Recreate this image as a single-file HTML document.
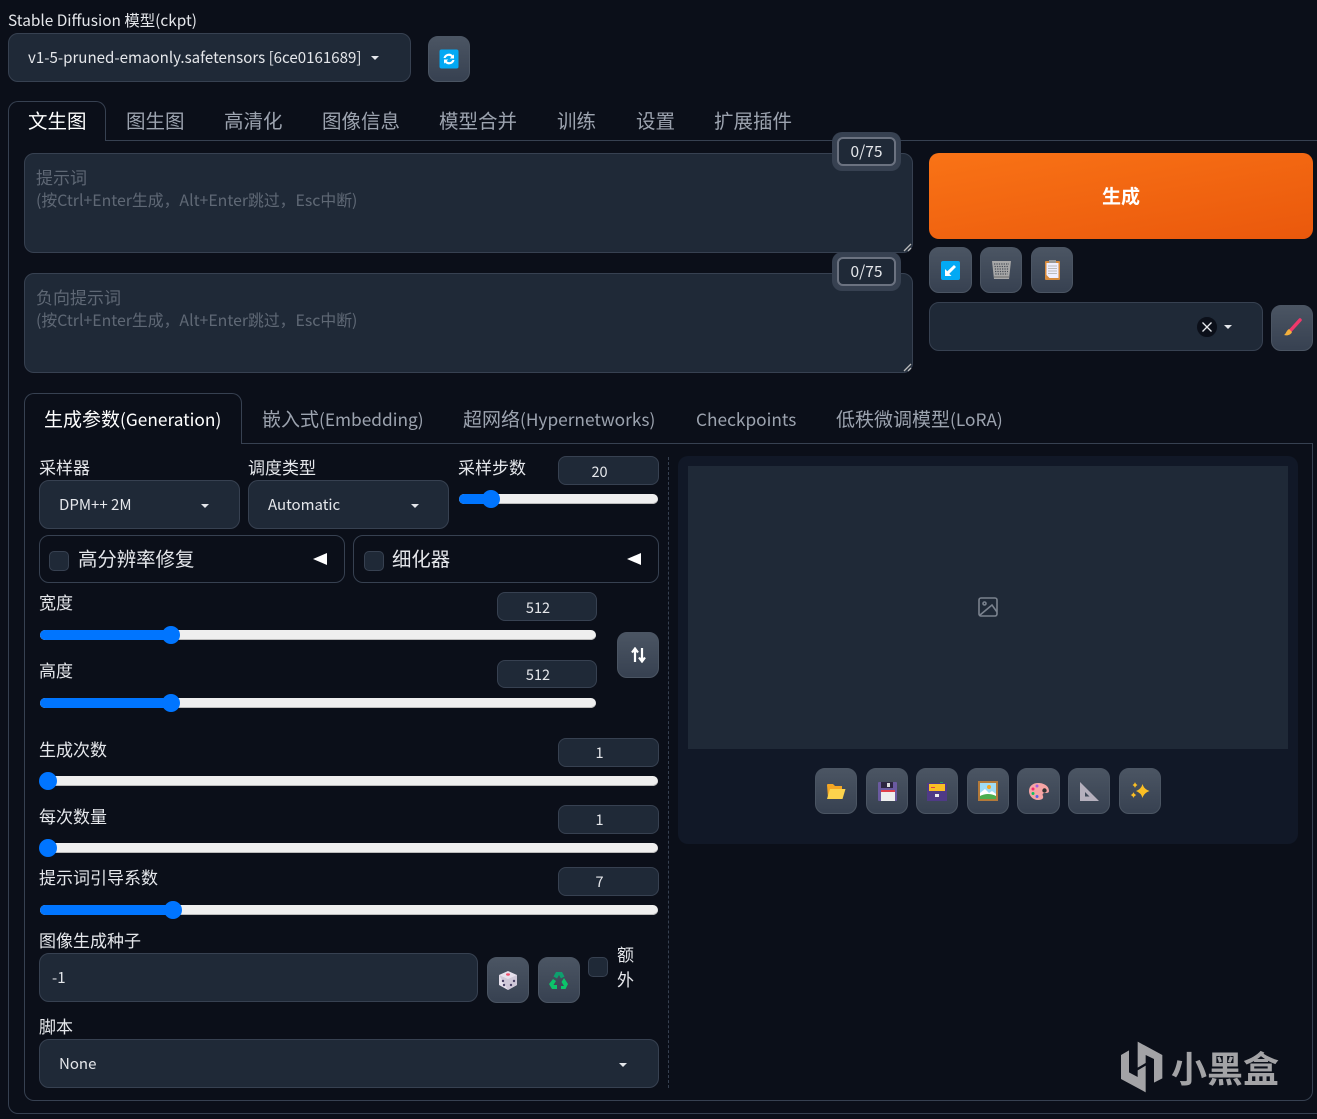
<!DOCTYPE html>
<html><head><meta charset="utf-8"><style>
*{box-sizing:border-box}
html,body{margin:0;padding:0;width:1317px;height:1119px;overflow:hidden;background:#0b0f19}
body{font-family:"Noto Sans CJK SC","Liberation Sans",sans-serif;color:#e5e7eb;position:relative}
.a{position:absolute}
.t{position:absolute;white-space:nowrap;line-height:24px;height:24px}
.box{position:absolute;background:#1f2937;border:1px solid #374151;border-radius:10px}
.btn{position:absolute;width:42px;height:46px;border-radius:10px;background:linear-gradient(to bottom,#4b5563,#374151);border:1px solid #4b5563;display:flex;align-items:center;justify-content:center}
.tab{position:absolute;font-size:19.5px;line-height:28px;color:#9ca3af;white-space:nowrap}
.tab2{font-size:19px}
.tab2 span{font-size:17.3px}
.num{position:absolute;width:101px;height:29px;background:#1f2937;border:1px solid #374151;border-radius:8px;text-align:center;font-size:14.5px;line-height:30px;color:#e5e7eb;padding-right:18px}
.lab{position:absolute;font-size:17px;line-height:22px;color:#e5e7eb;white-space:nowrap}
.track{position:absolute;height:10px;background:#efefef;border-radius:5px;box-shadow:inset 0 -1px 0 #bbb}
.fill{position:absolute;left:0;top:0;height:10px;background:#0075ff;border-radius:5px}
.thumb{position:absolute;top:-4px;width:18px;height:18px;border-radius:50%;background:#0075ff}
.car{position:absolute;width:0;height:0;border-left:4.5px solid transparent;border-right:4.5px solid transparent;border-top:4.5px solid #e5e7eb}
.cb{position:absolute;width:20px;height:20px;background:#1f2937;border:1px solid #374151;border-radius:5px}
.sel{font-size:15px;line-height:22px;color:#e5e7eb;position:absolute;white-space:nowrap}
.ph{position:absolute;color:#5f6875;font-size:17px;line-height:23px;white-space:nowrap}
.cnt{position:absolute;left:832px;width:69px;height:39px;border-radius:10px;background:#374151;padding:5px}
.cnt div{width:59px;height:29px;background:#1f2937;border:2px solid #6b7280;border-radius:6px;text-align:center;font-size:15.5px;line-height:25px;color:#e5e7eb}
.tri{position:absolute;width:0;height:0;border-top:6.5px solid transparent;border-bottom:6.5px solid transparent;border-right:14px solid #fff}
</style></head><body>

<div class="t" style="left:8px;top:8px;font-size:15.4px;color:#e5e7eb">Stable Diffusion 模型(ckpt)</div>
<div class="box" style="left:8px;top:33px;width:403px;height:49px"></div>
<div class="sel" style="left:28px;top:46px;font-size:15.1px">v1-5-pruned-emaonly.safetensors [6ce0161689]</div>
<div class="car" style="left:371px;top:56px"></div>
<div class="btn" style="left:428px;top:36px">
<svg width="20" height="20" viewBox="0 0 20 20"><rect width="19" height="19" x=".5" y=".5" rx="2" fill="#03a9f4"/><path d="M4.5 9a5.5 5.5 0 0 1 9.500-2.500l1-1.300v4.300h-4.200l1.500-1.500a3.400 3.400 0 0 0-5.700 1zM15.500 11a5.500 5.500 0 0 1-9.500 2.500l-1 1.300v-4.300h4.200l-1.500 1.500a3.400 3.400 0 0 0 5.700-1z" fill="#fff"/></svg></div>

<!-- outer tabs/panel -->
<div class="a" style="left:105px;top:140px;width:1212px;height:1px;background:#374151"></div>
<div class="a" style="left:8px;top:101px;width:98px;height:40px;border:1px solid #374151;border-bottom:0;border-radius:10px 10px 0 0;background:#0b0f19"></div>
<div class="a" style="left:8px;top:140px;width:1309px;height:974px;border:1px solid #374151;border-top:0;border-right:0;border-radius:0 0 0 10px"></div>
<div class="tab" style="left:28px;top:106px;color:#fff">文生图</div>
<div class="tab" style="left:126px;top:106px">图生图</div>
<div class="tab" style="left:224px;top:106px">高清化</div>
<div class="tab" style="left:322px;top:106px">图像信息</div>
<div class="tab" style="left:439px;top:106px">模型合并</div>
<div class="tab" style="left:557px;top:106px">训练</div>
<div class="tab" style="left:636px;top:106px">设置</div>
<div class="tab" style="left:714px;top:106px">扩展插件</div>

<!-- prompts -->
<div class="box" style="left:24px;top:153px;width:889px;height:100px"></div>
<div class="ph" style="left:36px;top:165px">提示词</div>
<div class="ph" style="left:36px;top:188px;font-size:15.85px">(按Ctrl+Enter生成，Alt+Enter跳过，Esc中断)</div>
<div class="box" style="left:24px;top:273px;width:889px;height:100px"></div>
<div class="ph" style="left:36px;top:285px">负向提示词</div>
<div class="ph" style="left:36px;top:308px;font-size:15.85px">(按Ctrl+Enter生成，Alt+Enter跳过，Esc中断)</div>
<svg class="a" style="left:903px;top:243px" width="9" height="9" viewBox="0 0 9 9"><path d="M1 8L8 1M5 8L8 5" stroke="#bbb" stroke-width="1.300"/></svg>
<svg class="a" style="left:903px;top:363px" width="9" height="9" viewBox="0 0 9 9"><path d="M1 8L8 1M5 8L8 5" stroke="#bbb" stroke-width="1.300"/></svg>
<div class="cnt" style="top:132px"><div>0/75</div></div>
<div class="cnt" style="top:252px"><div>0/75</div></div>

<!-- right actions -->
<div class="a" style="left:929px;top:153px;width:384px;height:86px;border-radius:10px;background:linear-gradient(170deg,#f97316,#ea580c);color:#fff;font-size:19px;font-weight:700;text-align:center;line-height:85px">生成</div>
<div class="btn" style="left:929px;top:247px;height:46px;width:43px">
<svg width="19" height="19" viewBox="0 0 19 19"><rect width="19" height="19" rx="2" fill="#03a9f4"/><path d="M4 15V8l2.300 2.300L13 4l2 2-6.700 6.700L10.500 15z" fill="#fff"/></svg></div>
<div class="btn" style="left:980px;top:247px">
<svg width="19" height="20" viewBox="0 0 19 20"><path d="M0 1h19l-2 18H2z" fill="#a8a8a8"/><path d="M2 4h15M2.500 6.500h14M2.800 9h13.400M3 11.500h13M3.300 14h12.400" stroke="#4a4f58" stroke-width="1.300" stroke-dasharray="1.300 1.100" fill="none"/><path d="M2 17h15" stroke="#888" stroke-width="2"/></svg></div>
<div class="btn" style="left:1031px;top:247px">
<svg width="15" height="20" viewBox="0 0 15 20"><rect width="15" height="19" y="1" rx="1" fill="#d68a3c"/><path d="M1.500 3h12v15H4.500L1.500 15z" fill="#eef"/><rect x="4" y="0" width="7" height="3" fill="#999"/><path d="M3 6h9M3 8.500h9M3 11h9M3 13.500h9" stroke="#bbb" stroke-width="1"/></svg></div>
<div class="box" style="left:929px;top:302px;width:334px;height:49px"></div>
<div class="a" style="left:1196px;top:316px;width:22px;height:22px;border-radius:50%;background:#0b0f19;border:1px solid #1f2937"></div>
<svg class="a" style="left:1202px;top:322px" width="10" height="10" viewBox="0 0 10 10"><path d="M.5.500l9 9M9.500.500l-9 9" stroke="#e5e7eb" stroke-width="1.300"/></svg>
<div class="car" style="left:1224px;top:325px"></div>
<div class="btn" style="left:1271px;top:305px">
<svg width="20" height="20" viewBox="0 0 20 20"><path d="M18 2L8 13" stroke="#f0386b" stroke-width="3.500" stroke-linecap="round"/><path d="M7 11l3 3c-1 3-5 4-8 3 2-1 2-4 5-6z" fill="#f4b13c"/></svg></div>

<!-- inner tabs/panel -->
<div class="a" style="left:241px;top:443px;width:1072px;height:1px;background:#374151"></div>
<div class="a" style="left:24px;top:443px;width:1289px;height:658px;border:1px solid #374151;border-top:0;border-radius:0 0 10px 10px"></div>
<div class="a" style="left:24px;top:393px;width:218px;height:51px;border:1px solid #374151;border-bottom:0;border-radius:10px 10px 0 0;background:#0b0f19"></div>
<div class="tab tab2" style="left:44px;top:405px;color:#fff">生成参数<span>(Generation)</span></div>
<div class="tab tab2" style="left:262px;top:405px">嵌入式<span>(Embedding)</span></div>
<div class="tab tab2" style="left:463px;top:405px">超网络<span>(Hypernetworks)</span></div>
<div class="tab tab2" style="left:696px;top:405px"><span>Checkpoints</span></div>
<div class="tab tab2" style="left:836px;top:405px">低秩微调模型<span>(LoRA)</span></div>

<!-- left column -->
<div class="lab" style="left:39px;top:456px">采样器</div>
<div class="lab" style="left:248px;top:456px">调度类型</div>
<div class="lab" style="left:458px;top:456px">采样步数</div>
<div class="box" style="left:39px;top:480px;width:201px;height:49px"></div>
<div class="sel" style="left:59px;top:494px">DPM++ 2M</div>
<div class="car" style="left:201px;top:504px"></div>
<div class="box" style="left:248px;top:480px;width:201px;height:49px"></div>
<div class="sel" style="left:268px;top:494px">Automatic</div>
<div class="car" style="left:411px;top:504px"></div>
<div class="num" style="left:558px;top:456px">20</div>
<div class="track" style="left:459px;top:494px;width:199px"><div class="fill" style="width:32px"></div><div class="thumb" style="left:23px"></div></div>

<div class="a" style="left:39px;top:535px;width:306px;height:48px;border:1px solid #374151;border-radius:10px"></div>
<div class="cb" style="left:49px;top:551px"></div>
<div class="a" style="left:78px;top:544px;font-size:19.4px;line-height:28px;white-space:nowrap">高分辨率修复</div>
<div class="tri" style="left:313px;top:553px"></div>
<div class="a" style="left:353px;top:535px;width:306px;height:48px;border:1px solid #374151;border-radius:10px"></div>
<div class="cb" style="left:364px;top:551px"></div>
<div class="a" style="left:392px;top:544px;font-size:19.4px;line-height:28px;white-space:nowrap">细化器</div>
<div class="tri" style="left:627px;top:553px"></div>

<div class="lab" style="left:39px;top:591px">宽度</div>
<div class="num" style="left:497px;top:592px;width:100px">512</div>
<div class="track" style="left:40px;top:630px;width:556px"><div class="fill" style="width:131px"></div><div class="thumb" style="left:122px"></div></div>
<div class="lab" style="left:39px;top:659px">高度</div>
<div class="num" style="left:497px;top:660px;width:100px;height:28px;line-height:28px">512</div>
<div class="track" style="left:40px;top:698px;width:556px"><div class="fill" style="width:131px"></div><div class="thumb" style="left:122px"></div></div>
<div class="btn" style="left:617px;top:632px">
<svg width="15" height="16" viewBox="0 0 15 16"><path d="M4 15V3M1 5.500L4 1.500l3 4M11 1v12M8 10.500l3 4 3-4" stroke="#fff" stroke-width="2.200" fill="none"/></svg></div>

<div class="lab" style="left:39px;top:738px">生成次数</div>
<div class="num" style="left:558px;top:738px;line-height:28px">1</div>
<div class="track" style="left:40px;top:776px;width:618px"><div class="thumb" style="left:-1px"></div></div>
<div class="lab" style="left:39px;top:805px">每次数量</div>
<div class="num" style="left:558px;top:805px;line-height:28px">1</div>
<div class="track" style="left:40px;top:843px;width:618px"><div class="thumb" style="left:-1px"></div></div>
<div class="lab" style="left:39px;top:866px">提示词引导系数</div>
<div class="num" style="left:558px;top:867px;line-height:28px">7</div>
<div class="track" style="left:40px;top:905px;width:618px"><div class="fill" style="width:133px"></div><div class="thumb" style="left:124px"></div></div>

<div class="lab" style="left:39px;top:929px">图像生成种子</div>
<div class="box" style="left:39px;top:953px;width:439px;height:49px"></div>
<div class="sel" style="left:52px;top:967px">-1</div>
<div class="btn" style="left:487px;top:957px">
<svg width="18" height="19" viewBox="0 0 18 19"><path d="M9 0l9 4v10l-9 5-9-5V4z" fill="#e6e0ec"/><path d="M0 4l9 4 9-4v10l-9 5z" fill="#cfc8d8"/><ellipse cx="9" cy="3.500" rx="2" ry="1.200" fill="#f0506e"/><circle cx="4" cy="10" r="1.200" fill="#4a4266"/><circle cx="5" cy="14" r="1.200" fill="#4a4266"/><circle cx="12" cy="14" r="1.200" fill="#4a4266"/><circle cx="15" cy="10" r="1.200" fill="#4a4266"/></svg></div>
<div class="btn" style="left:538px;top:957px">
<svg width="20" height="19" viewBox="0 0 20 19"><path d="M7 1h6l2.500 4.500L12 7.500 10 4 8 7.500 4.500 5.500z" fill="#0e9f6e"/><path d="M15 7l4 6-2.500 5H12v-3h3l-2.500-4z" fill="#0cc46a"/><path d="M4 8l3 2-2.500 4H8v4H3L0 13z" fill="#0cc46a"/></svg></div>
<div class="cb" style="left:588px;top:957px"></div>
<div class="a" style="left:617px;top:941px;font-size:17px;line-height:25px">额<br>外</div>

<div class="lab" style="left:39px;top:1015px">脚本</div>
<div class="box" style="left:39px;top:1039px;width:620px;height:49px"></div>
<div class="sel" style="left:59px;top:1053px">None</div>
<div class="car" style="left:619px;top:1063px"></div>

<div class="a" style="left:668px;top:457px;width:0;height:631px;border-left:1px dashed #374151"></div>

<!-- gallery -->
<div class="a" style="left:678px;top:456px;width:620px;height:388px;background:#111827;border-radius:10px"></div>
<div class="a" style="left:688px;top:466px;width:600px;height:283px;background:#1f2937"></div>
<svg class="a" style="left:978px;top:597px" width="20" height="20" viewBox="0 0 20 20" fill="none" stroke="#7a828e" stroke-width="1.600"><rect x="1" y="1" width="18" height="18" rx="2"/><circle cx="6.500" cy="6.500" r="1.500"/><path d="M2 18L14 8l5 7"/></svg>

<div class="btn" style="left:815px;top:768px"><svg width="20" height="17" viewBox="0 0 20 17"><path d="M1 2q0-1 1-1h5l2 2h7v3H5L2 15z" fill="#f5a623"/><path d="M4 6h15.500L16.500 16H1z" fill="#fcd34d"/></svg></div>
<div class="btn" style="left:866px;top:768px"><svg width="19" height="19" viewBox="0 0 19 19"><rect width="19" height="19" rx="1" fill="#6a5aa0"/><rect x="3" y="0" width="12" height="6" fill="#2c2540"/><rect x="9" y="1" width="3" height="4" fill="#ddd"/><rect x="3" y="8" width="14" height="11" fill="#eee"/><rect x="3" y="8" width="14" height="2" fill="#e0404a"/></svg></div>
<div class="btn" style="left:916px;top:768px"><svg width="20" height="19" viewBox="0 0 20 19"><path d="M13 0h3v3h-3z" fill="#1fa463"/><rect y="1" width="20" height="18" fill="#4f3a86"/><rect x="2" y="2" width="16" height="7" fill="#fbbf24"/><rect x="4" y="5" width="4" height="1" fill="#e0404a"/><rect x="8" y="12" width="4" height="3" fill="#eee"/></svg></div>
<div class="btn" style="left:967px;top:768px"><svg width="20" height="20" viewBox="0 0 20 20"><rect width="20" height="20" fill="#b37a3a"/><rect x="2" y="2" width="16" height="16" fill="#9fdcf5"/><circle cx="11" cy="6" r="2" fill="#f5a623"/><path d="M2 12l5-4 4 4 3-2 4 3v5H2z" fill="#fff"/><path d="M2 18v-3q8-4 16 0v3z" fill="#4cae4f"/></svg></div>
<div class="btn" style="left:1017px;top:768px;width:43px"><svg width="20" height="17" viewBox="0 0 20 17"><path d="M9 0c6 0 11 3 11 8 0 2-2 2-4 2-2 0-3 1-2 3 1 3-2 4-5 4C4 17 0 13 0 8s4-8 9-8z" fill="#f6a5a5"/><circle cx="15.500" cy="7.500" r="2.200" fill="#333"/><circle cx="8" cy="3" r="1.500" fill="#a55ee0"/><circle cx="4" cy="6" r="1.500" fill="#ef2d6e"/><circle cx="4" cy="10.500" r="1.500" fill="#10c060"/><circle cx="8" cy="13.500" r="1.500" fill="#5a60e8"/></svg></div>
<div class="btn" style="left:1068px;top:768px"><svg width="19" height="19" viewBox="0 0 19 19"><path fill-rule="evenodd" d="M0 0l19 19H0zM5 10v4.500h4.500z" fill="#b5b0bd"/></svg></div>
<div class="btn" style="left:1119px;top:768px"><svg width="20" height="20" viewBox="0 0 20 20" fill="#fbbf24"><path d="M12.500 3q1.200 5 7 7-5.800 2-7 7-1.200-5-6.500-7 5.300-2 6.500-7z"/><path d="M5 1q.5 2 2.500 3Q5.500 5 5 7 4.500 5 2.500 4 4.500 3 5 1zM3.500 11q.5 2 2.800 3-2.300 1-2.800 3-.5-2-2.800-3 2.300-1 2.800-3z"/></svg></div>

<!-- watermark -->
<svg class="a" style="left:1115px;top:1035px" width="60" height="62" viewBox="0 0 180 186" fill="#a3a3a6"><path d="M18 60L42 46V112L68 126V106L92 92V172L18 132z"/><path d="M68 20L142 60V130L117 143V72L92 60V84L68 98z"/></svg>
<div class="a" style="left:1171px;top:1044px;font-size:36px;line-height:46px;font-weight:700;color:#a3a3a6;white-space:nowrap">小黑盒</div>
</body></html>
